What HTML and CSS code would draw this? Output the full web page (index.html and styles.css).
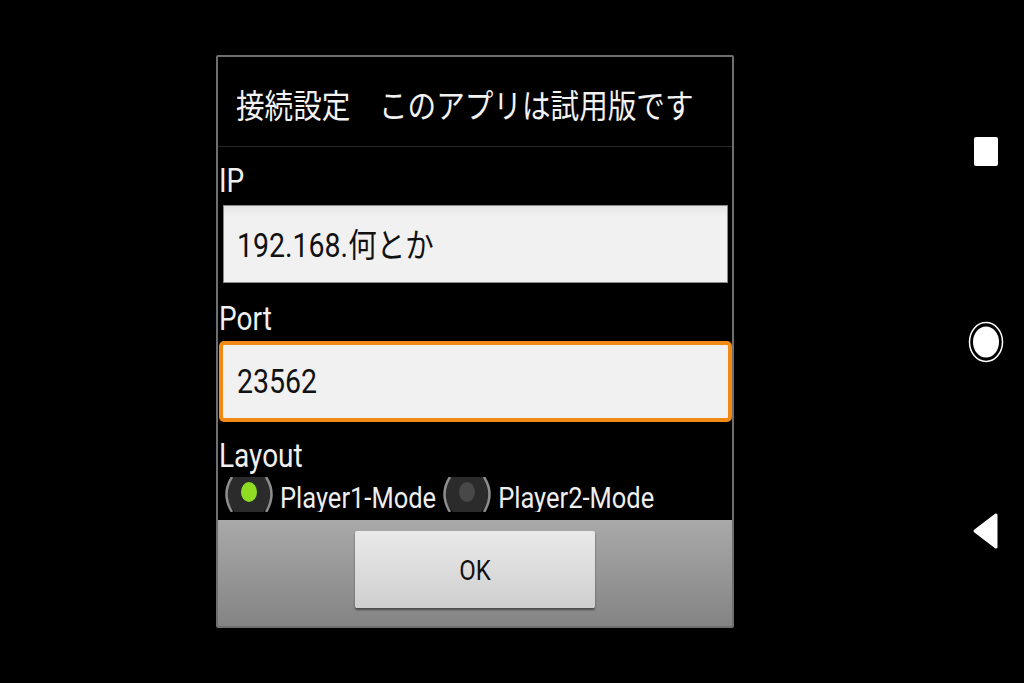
FILE: index.html
```html
<!DOCTYPE html>
<html lang="ja">
<head>
    <meta charset="UTF-8">
    <meta name="viewport" content="width=device-width, initial-scale=1.0">
    <title>接続設定</title>
    <link rel="stylesheet" href="styles.css">
</head>
<body>

<div class="screen">
    <div class="dialog">
        <div class="dialog-title"><span class="tall">接続設定　このアプリは試用版です</span></div>
        <div class="form">
            <div class="field-label"><span class="tall">IP</span></div>
            <div class="text-box"><span class="tall">192.168.何とか</span></div>
            <div class="field-label port-label"><span class="tall">Port</span></div>
            <div class="text-box focused"><span class="tall">23562</span></div>
            <div class="field-label layout-label"><span class="tall">Layout</span></div>
            <div class="radio-row">
                <svg class="radio" width="50" height="35" viewBox="0 0 50 35">
                    <ellipse cx="25" cy="16" rx="22" ry="25" fill="#2b2b2b"/>
                    <path d="M8 0 Q-3 17 8 35 M42 0 Q53 17 42 35" fill="none" stroke="#8d8d8d" stroke-width="2.5"/>
                    <ellipse cx="25" cy="15" rx="8" ry="10" fill="#8fdc22"/>
                </svg>
                <span class="radio-text"><span class="tall">Player1-Mode</span></span>
                <svg class="radio" width="50" height="35" viewBox="0 0 50 35">
                    <ellipse cx="25" cy="16" rx="22" ry="25" fill="#2b2b2b"/>
                    <path d="M8 0 Q-3 17 8 35 M42 0 Q53 17 42 35" fill="none" stroke="#8d8d8d" stroke-width="2.5"/>
                    <ellipse cx="25" cy="15" rx="8" ry="10" fill="#484848"/>
                </svg>
                <span class="radio-text"><span class="tall">Player2-Mode</span></span>
            </div>
        </div>
        <div class="button-bar">
            <button class="ok-button"><span class="tall">OK</span></button>
        </div>
    </div>

    <div class="nav-bar">
        <div class="nav-square"></div>
        <svg class="nav-home" width="36" height="42" viewBox="0 0 36 42">
            <ellipse cx="18" cy="21" rx="16.5" ry="19.5" fill="none" stroke="#fff" stroke-width="1.5"/>
            <ellipse cx="18" cy="21" rx="13" ry="15.5" fill="#fff"/>
        </svg>
        <svg class="nav-back" width="28" height="38" viewBox="0 0 28 38">
            <path d="M24 3 V35 L3 19 Z" fill="#fff" stroke="#fff" stroke-width="3" stroke-linejoin="round"/>
        </svg>
    </div>
</div>

</body>
</html>
```
FILE: styles.css
```css
body {
    margin: 0;
    background-color: #000;
    font-family: Roboto, "Noto Sans CJK JP", sans-serif;
    color: #fff;
}
.screen {
    display: flex;
    height: 683px;
    overflow: hidden;
}
.tall {
    display: inline-block;
    transform: scaleY(1.16);
    white-space: nowrap;
}
.dialog {
    display: flex;
    flex-direction: column;
    box-sizing: border-box;
    width: 518px;
    height: 573px;
    margin: 55px 0 0 216px;
    border: 2px solid #6e6e6e;
    border-radius: 2px;
}
.dialog-title {
    box-sizing: border-box;
    height: 90px;
    padding: 29px 0 0 18px;
    font-size: 28.6px;
    line-height: 40px;
    color: #f2f2f2;
    border-bottom: 1px solid #262626;
}
.form {
    flex: 1;
    padding: 15px 0 0 1px;
    overflow: hidden;
}
.field-label {
    height: 43px;
    font-size: 28px;
    line-height: 40px;
    color: #f0f0f0;
}
.port-label {
    margin-top: 17px;
    height: 41px;
}
.layout-label {
    margin-top: 15px;
    height: 40px;
}
.text-box {
    box-sizing: border-box;
    height: 78px;
    margin: 0 4px 0 4px;
    padding-left: 13px;
    background: linear-gradient(#e6e6e6, #f1f1f1 14%);
    border: 1px solid #8a8a8a;
    font-size: 28.5px;
    line-height: 79px;
    color: #111;
}
.text-box.focused {
    height: 81px;
    margin: 0;
    padding-left: 14px;
    background: #f1f1f1;
    border: 4px solid #f08a14;
    border-radius: 5px;
    line-height: 73px;
}
.radio-row {
    display: flex;
    align-items: flex-start;
    height: 35px;
    margin-left: 5px;
    overflow: hidden;
}
.radio-text {
    margin: 0 6px 0 6px;
    font-size: 25.5px;
    line-height: 42px;
    color: #eee;
}
.button-bar {
    display: flex;
    justify-content: center;
    box-sizing: border-box;
    height: 106px;
    padding-top: 11px;
    background: linear-gradient(#a9a9a9, #848484);
}
.ok-button {
    width: 240px;
    height: 77px;
    padding: 3px 0 0;
    background: linear-gradient(#e9e9e9, #cfcfcf);
    border: none;
    border-radius: 2px;
    box-shadow: 0 2px 2px #4a4a4a;
    font-family: Roboto, sans-serif;
    font-size: 24px;
    color: #111;
}
.nav-bar {
    display: flex;
    flex-direction: column;
    align-items: center;
    width: 36px;
    margin: 137px 0 0 234px;
}
.nav-square {
    width: 24px;
    height: 29px;
    background-color: #fff;
    border-radius: 2px;
}
.nav-home {
    margin-top: 155px;
}
.nav-back {
    margin-top: 149px;
}
```
